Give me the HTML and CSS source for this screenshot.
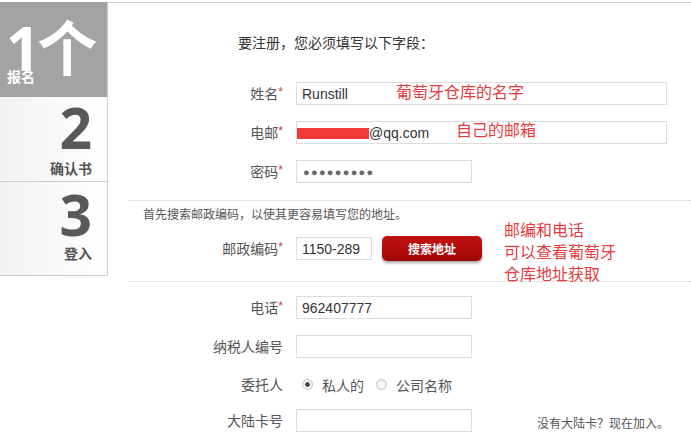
FILE: index.html
```html
<!DOCTYPE html>
<html lang="zh-CN">
  <head>
    <meta charset="UTF-8" />
    <meta name="viewport" content="width=device-width, initial-scale=1.0" />
    <title>注册</title>
    <link rel="stylesheet" href="styles.css">
  </head>
  <body>
    <div class="page">
      <aside class="steps">
        <div class="step active">
          <span class="num">1个</span>
          <span class="name">报名</span>
        </div>
        <div class="step">
          <span class="num">2</span>
          <span class="name">确认书</span>
        </div>
        <div class="step last">
          <span class="num">3</span>
          <span class="name">登入</span>
        </div>
      </aside>

      <main class="form">
        <section class="block first">
          <p class="intro">要注册，您必须填写以下字段：</p>

          <div class="row">
            <label class="label">姓名<i>*</i></label>
            <input class="field wide" type="text" value="Runstill" />
            <span class="remark remark-name">葡萄牙仓库的名字</span>
          </div>

          <div class="row">
            <label class="label">电邮<i>*</i></label>
            <span class="mail-wrap">
              <input class="field wide mail" type="text" value="@qq.com" />
              <span class="redact"></span>
            </span>
            <span class="remark remark-mail">自己的邮箱</span>
          </div>

          <div class="row">
            <label class="label">密码<i>*</i></label>
            <input class="field mid pass" type="text" value="●●●●●●●●●" />
          </div>
        </section>

        <section class="block second">
          <p class="hint">首先搜索邮政编码，以使其更容易填写您的地址。</p>

          <div class="row">
            <label class="label">邮政编码<i>*</i></label>
            <input class="field short" type="text" value="1150-289" />
            <button class="search">搜索地址</button>
            <span class="remark remark-post">邮编和电话<br />可以查看葡萄牙<br />仓库地址获取</span>
          </div>
        </section>

        <section class="block third">
          <div class="row">
            <label class="label">电话<i>*</i></label>
            <input class="field mid" type="text" value="962407777" />
          </div>

          <div class="row">
            <label class="label">纳税人编号</label>
            <input class="field mid" type="text" />
          </div>

          <div class="row radios">
            <label class="label">委托人</label>
            <label class="opt"><input type="radio" name="who" checked /> 私人的</label>
            <label class="opt"><input type="radio" name="who" /> 公司名称</label>
          </div>

          <div class="row">
            <label class="label">大陆卡号</label>
            <input class="field mid" type="text" />
            <span class="join">没有大陆卡？现在加入。</span>
          </div>
        </section>
      </main>
    </div>
  </body>
</html>
```

FILE: styles.css
```css
body {
  margin: 0;
  font-family: "Liberation Sans", "Noto Sans CJK SC", sans-serif;
  color: #555;
  background: #fff;
}
.page {
  display: flex;
  margin-top: 2px;
}
.steps {
  width: 107px;
  border-right: 1px solid #ccc;
  align-self: flex-start;
}
.step {
  display: flex;
  flex-direction: column;
  align-items: flex-end;
  height: 85px;
  padding-right: 15px;
  border-bottom: 1px solid #ccc;
  background: linear-gradient(to right, #f2f2f2, #fff);
  box-sizing: border-box;
  overflow: hidden;
}
.step.last {
  height: 94px;
}
.step .num {
  font-family: "Open Sans", "Noto Sans CJK SC", sans-serif;
  font-weight: 700;
  font-size: 57px;
  line-height: 50px;
  color: #595959;
  margin-top: 5px;
}
.step .name {
  font-family: "Noto Sans CJK SC", sans-serif;
  font-weight: 700;
  font-size: 14px;
  line-height: 18px;
  color: #555;
  margin-top: 7px;
}
.step.last .num {
  margin-top: 7px;
}
.step.last .name {
  margin-top: 5px;
}
.step.active {
  height: 95px;
  align-items: flex-start;
  padding: 0 0 0 6px;
  border-bottom: none;
  background: #a3a3a3;
}
.step.active .num {
  color: #fff;
  font-size: 60px;
  line-height: 50px;
  letter-spacing: -3px;
  white-space: nowrap;
  margin-top: 21px;
}
.step.active .name {
  color: #fff;
  margin-top: -6px;
  margin-left: 1px;
}

.form {
  flex: 1;
  border-top: 1px solid #ccc;
  padding-left: 20px;
}
.block {
  border-top: 1px dotted #ccc;
}
.block.first {
  border-top: none;
  padding-top: 30px;
  padding-bottom: 1px;
}
.intro {
  margin: 0 0 29px 110px;
  font-size: 14px;
  line-height: 20px;
  color: #333;
}
.row {
  position: relative;
  display: flex;
  align-items: center;
  height: 23px;
  margin-bottom: 16px;
}
.label {
  width: 155px;
  margin-right: 13px;
  margin-top: -2px;
  text-align: right;
  font-size: 14px;
  color: #555;
  white-space: nowrap;
}
.label i {
  font-style: normal;
  color: #d0393b;
  font-size: 12px;
  vertical-align: 3px;
}
.field {
  box-sizing: border-box;
  height: 23px;
  border: 1px solid #ddd;
  padding: 0 5px;
  font-family: "Liberation Sans", sans-serif;
  font-size: 14px;
  color: #333;
  outline: none;
}
.wide {
  width: 371px;
}
.mid {
  width: 176px;
}
.short {
  width: 76px;
}
.mail-wrap {
  position: relative;
  display: block;
}
.mail {
  padding-left: 72px;
}
.redact {
  position: absolute;
  left: 1px;
  top: 7px;
  width: 72px;
  height: 11px;
  background: #f23a3a;
}
.pass {
  padding-left: 6px;
  font-size: 11px;
  letter-spacing: 1.3px;
  color: #666;
}
.remark {
  position: absolute;
  font-family: "Noto Sans CJK SC", sans-serif;
  font-size: 16px;
  line-height: 22px;
  color: #e63a3e;
  white-space: nowrap;
}
.remark-name {
  left: 268px;
  top: -2px;
}
.remark-mail {
  left: 328px;
  top: -3px;
}
.remark-post {
  left: 376px;
  top: -19px;
}

.block.second {
  padding-top: 5px;
  padding-bottom: 5px;
}
.hint {
  margin: 0 0 15px 15px;
  font-family: "Noto Sans CJK SC", sans-serif;
  font-size: 12px;
  line-height: 16px;
  color: #555;
}
.search {
  width: 100px;
  height: 25px;
  margin-left: 10px;
  border: none;
  border-radius: 5px;
  background: linear-gradient(#c3120f, #a20707);
  box-shadow: 0 2px 3px rgba(0, 0, 0, 0.35);
  color: #fff;
  font-family: "Noto Sans CJK SC", sans-serif;
  font-size: 12px;
  font-weight: 700;
}

.block.third {
  padding-top: 14px;
}
.row.radios {
  height: 21px;
  margin-bottom: 14px;
}
.opt {
  display: flex;
  align-items: center;
  font-family: "Noto Sans CJK SC", sans-serif;
  font-size: 14px;
  color: #555;
  margin-right: 6px;
}
.opt input {
  appearance: none;
  width: 11px;
  height: 11px;
  margin: 0 9px 0 6px;
  border: 1px solid #c4c4c4;
  border-radius: 50%;
  background: radial-gradient(circle, #fff 0, #e6e6e6 100%);
}
.opt input:checked {
  background: radial-gradient(circle, #444 0 2px, #f4f4f4 2.5px);
}
.join {
  margin-left: 65px;
  margin-top: 3px;
  font-family: "Noto Sans CJK SC", sans-serif;
  font-size: 12px;
  color: #555;
}
```
